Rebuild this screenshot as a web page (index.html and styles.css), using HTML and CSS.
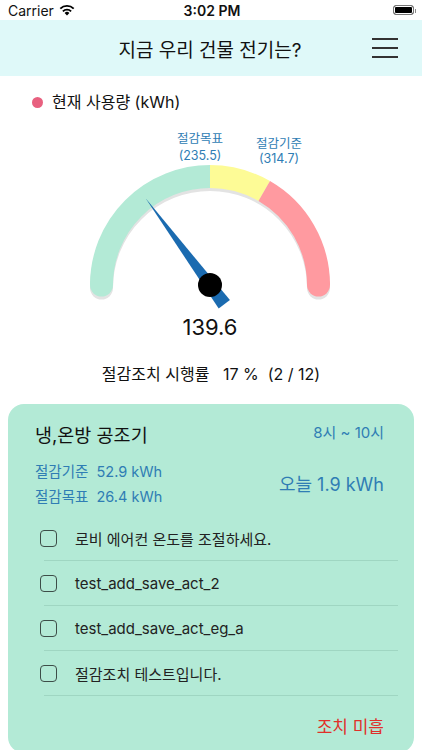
FILE: index.html
```
<html>
    <head>
        <title>지금 우리 건물 전기는?</title>
        <meta charset="utf-8">
        <link rel="stylesheet" href="styles.css">
    </head>
    <body>
        <div class="status">
            <span class="carrier">Carrier
                <svg class="wifi" width="16" height="12" viewBox="0 0 16 12">
                    <path d="M8 11.5 L5.6 9 A3.4 3.4 0 0 1 10.4 9 Z" fill="#000"/>
                    <path d="M3.9 7.3 A5.8 5.8 0 0 1 12.1 7.3" stroke="#000" stroke-width="1.9" fill="none"/>
                    <path d="M1.3 4.6 A9.5 9.5 0 0 1 14.7 4.6" stroke="#000" stroke-width="1.9" fill="none"/>
                </svg>
            </span>
            <span class="clock">3:02 PM</span>
            <span class="battery"><span class="battery-level"></span></span>
        </div>

        <div class="topbar">
            <span></span>
            <h1 class="title">지금 우리 건물 전기는?</h1>
            <div class="menu">
                <span></span><span></span><span></span>
            </div>
        </div>

        <div class="legend"><span class="dot"></span>현재 사용량 (kWh)</div>

        <svg class="gauge" width="422" height="220" viewBox="0 0 422 220">
            <g transform="translate(0,3)" fill="none" stroke="#e3e3e3" stroke-width="23">
                <path d="M101.5 160 A108.5 108.5 0 0 1 318.5 160"/>
                <circle cx="101.5" cy="160" r="11.5" fill="#e3e3e3" stroke="none"/>
                <circle cx="318.5" cy="160" r="11.5" fill="#e3e3e3" stroke="none"/>
            </g>
            <circle cx="101.5" cy="160" r="11.5" fill="#b3ead6"/>
            <circle cx="318.5" cy="160" r="11.5" fill="#ff9aa0"/>
            <path d="M101.5 160 A108.5 108.5 0 0 1 210 51.5" fill="none" stroke="#b3ead6" stroke-width="23"/>
            <path d="M210 51.5 A108.5 108.5 0 0 1 264.25 66.04" fill="none" stroke="#fdfb96" stroke-width="23"/>
            <path d="M264.25 66.04 A108.5 108.5 0 0 1 318.5 160" fill="none" stroke="#ff9aa0" stroke-width="23"/>

            <text class="mark" x="200" y="18" text-anchor="middle">절감목표</text>
            <text class="mark" x="200" y="35" text-anchor="middle">(235.5)</text>
            <text class="mark" x="279" y="23" text-anchor="middle">절감기준</text>
            <text class="mark" x="279" y="38" text-anchor="middle">(314.7)</text>

            <polygon points="0,-108 7,24 -7,24" fill="#1b6bb0" transform="translate(210,160) rotate(-36.6)"/>
            <circle cx="210" cy="160" r="12" fill="#000"/>

            <text class="reading" x="210" y="210" text-anchor="middle">139.6</text>
        </svg>

        <div class="rate">절감조치 시행률 &nbsp;&nbsp;17 % &nbsp;(2 / 12)</div>

        <div class="card">
            <div class="card-head">
                <div>
                    <div class="card-title">냉,온방 공조기</div>
                    <div class="stat">절감기준 &nbsp;52.9 kWh</div>
                    <div class="stat">절감목표 &nbsp;26.4 kWh</div>
                </div>
                <div class="card-side">
                    <div class="hours">8시 ~ 10시</div>
                    <div class="today">오늘 1.9 kWh</div>
                </div>
            </div>

            <ul class="checklist">
                <li><span class="box"></span>로비 에어컨 온도를 조절하세요.</li>
                <li><span class="box"></span>test_add_save_act_2</li>
                <li><span class="box"></span>test_add_save_act_eg_a</li>
                <li><span class="box"></span>절감조치 테스트입니다.</li>
            </ul>

            <div class="verdict">조치 미흡</div>
        </div>
    </body>
</html>
```
FILE: styles.css
```
body {
    margin: 0;
    font-family: Inter, "Noto Sans CJK KR", sans-serif;
    color: #111;
    background: #fff;
}

.status {
    height: 20px;
    padding: 0 6px 0 8px;
    display: flex;
    justify-content: space-between;
    align-items: center;
    font-size: 14px;
}

.carrier {
    display: flex;
    align-items: center;
    gap: 5px;
    width: 100px;
}

.clock {
    font-weight: 600;
    font-size: 14px;
}

.battery {
    width: 100px;
    display: flex;
    justify-content: flex-end;
    position: relative;
}

.battery-level {
    width: 19px;
    height: 8px;
    border: 1.5px solid #777;
    border-radius: 3px;
    background: #000;
    box-shadow: inset 0 0 0 1px #fff;
}

.battery::after {
    content: "";
    width: 1.5px;
    height: 4px;
    margin: 4px 0 0 1px;
    background: #888;
}

.topbar {
    height: 56px;
    background: #dff9f9;
    display: grid;
    grid-template-columns: 1fr auto 1fr;
    align-items: center;
}

.title {
    margin: 0;
    font-size: 19px;
    font-weight: normal;
    padding-right: 2px;
}

.menu {
    justify-self: end;
    margin-right: 24px;
    display: flex;
    flex-direction: column;
    gap: 7px;
}

.menu span {
    width: 26px;
    height: 2px;
    background: #333;
}

.legend {
    margin-top: 15px;
    padding-left: 32px;
    font-size: 16px;
    line-height: 22px;
    display: flex;
    align-items: center;
    gap: 9px;
}

.dot {
    width: 11px;
    height: 11px;
    border-radius: 50%;
    background: #e8607f;
}

.gauge {
    display: block;
    margin-top: 12px;
}

.mark {
    font-size: 12.5px;
    fill: #2f7db4;
}

.reading {
    font-size: 22px;
    fill: #111;
}

.rate {
    margin-top: 17px;
    text-align: center;
    font-size: 16px;
    line-height: 24px;
}

.card {
    margin: 18px 8px 0;
    background: #b3ead6;
    border-radius: 16px;
    padding: 18px 30px 14px 27px;
}

.card-head {
    display: flex;
    justify-content: space-between;
}

.card-title {
    font-size: 18.5px;
    line-height: 26px;
    margin-bottom: 11px;
}

.stat {
    font-size: 14.5px;
    line-height: 25px;
    color: #2f7db4;
}

.card-side {
    display: flex;
    flex-direction: column;
    align-items: flex-end;
}

.hours {
    font-size: 15px;
    line-height: 22px;
    color: #2f7db4;
}

.today {
    margin-top: 29px;
    font-size: 18px;
    line-height: 24px;
    color: #2f7db4;
}

.checklist {
    list-style: none;
    margin: 7px -14px 0 9px;
    padding: 0;
}

.checklist li {
    height: 44px;
    border-bottom: 1px solid #9fd6c2;
    display: flex;
    align-items: center;
    font-size: 15px;
    color: #222;
}

.box {
    width: 15px;
    height: 15px;
    border: 1.5px solid #3d4d48;
    border-radius: 4px;
    margin: 0 18px 0 -4px;
}

.verdict {
    margin-top: 19px;
    text-align: right;
    font-size: 17px;
    line-height: 24px;
    color: #e0302a;
}
```
